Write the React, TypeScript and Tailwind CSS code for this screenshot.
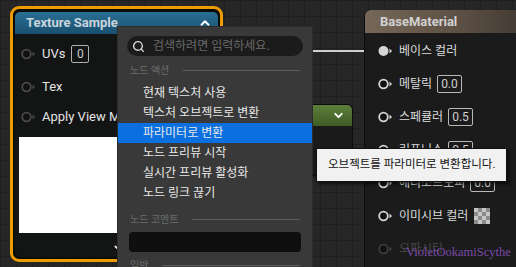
import { ChevronDown, ChevronUp, Search } from "lucide-react";

const FONT = "font-['Roboto','Noto_Sans_CJK_KR',sans-serif]";

function Pin({
  color = "#d4d4d4",
  filled = false,
}: {
  color?: string;
  filled?: boolean;
}) {
  return (
    <svg width="16" height="12" viewBox="0 0 16 12" className="shrink-0">
      <circle
        cx="5.5"
        cy="6"
        r={filled ? 5 : 4.3}
        fill={filled ? color : "#111"}
        stroke={color}
        strokeWidth={filled ? 0 : 1.8}
      />
      <polygon points="11.5,3.5 14,6 11.5,8.5" fill={color} />
    </svg>
  );
}

function ValueBox({ value }: { value: string }) {
  return (
    <span className="ml-[5px] flex h-[18px] items-center rounded-[2px] border border-[#b8b8b8] px-[3px] text-[12px] leading-none text-[#cfcfcf]">
      {value}
    </span>
  );
}

function TextureSampleNode() {
  return (
    <div className="absolute left-[10px] top-[6px] h-[256px] w-[213px] rounded-[9px] border-[3px] border-[#ec9c00] bg-[#0b0b0b] px-[2px] pt-[3px] pb-[2px]">
      <div className="flex h-full flex-col overflow-hidden rounded-[5px] bg-[#131414]">
        <div className="flex h-[22px] shrink-0 items-center justify-between bg-[linear-gradient(to_bottom,#2a6f94,#19506f)] pl-[11px] pr-[6px]">
          <span className="text-[13px] font-bold text-[#c9d4dc]">
            Texture Sample
          </span>
          <ChevronUp size={14} strokeWidth={3.2} className="text-white" />
        </div>
        <div className="flex flex-col pl-[6px] text-[13px] text-[#e4e4e4]">
          <div className="mt-[10px] flex h-[20px] items-center gap-[5px]">
            <Pin color="#4a4a4a" />
            <span>UVs</span>
            <span className="ml-[1px] flex h-[18px] w-[18px] items-center justify-center rounded-[2px] border border-[#b0b0b0] text-[12px] text-[#d0d0d0]">
              0
            </span>
          </div>
          <div className="mt-[13px] flex h-[20px] items-center gap-[5px]">
            <Pin color="#4a4a4a" />
            <span>Tex</span>
          </div>
          <div className="mt-[10px] flex h-[20px] items-center gap-[5px] whitespace-nowrap">
            <Pin color="#4a4a4a" />
            <span>Apply View MipBias</span>
          </div>
          <div className="mt-[10px] ml-[-2px] h-[96px] w-[110px] bg-white" />
          <div className="flex justify-end pr-[96px] pt-[10px]">
            <ChevronDown size={9} strokeWidth={4} className="text-white" />
          </div>
        </div>
      </div>
    </div>
  );
}

function ParamNode() {
  return (
    <div className="absolute left-[250px] top-[104px] h-[72px] w-[103px] overflow-hidden rounded-[6px] border border-[#0b0b0b] bg-[#1a1a1a]">
      <div className="flex h-[21px] items-center justify-end bg-[linear-gradient(to_bottom,#5d7f3a,#3f5c26)] pr-[7px]">
        <ChevronDown size={13} strokeWidth={3.5} className="text-white" />
      </div>
      <div className="flex justify-end pr-[16px] pt-[22px]">
        <span className="h-[11px] w-[11px] rounded-full bg-white" />
      </div>
    </div>
  );
}

const materialRows: {
  label: string;
  value?: string;
  filled?: boolean;
  checker?: boolean;
  dim?: boolean;
}[] = [
  { label: "베이스 컬러", filled: true },
  { label: "메탈릭", value: "0.0" },
  { label: "스페큘러", value: "0.5" },
  { label: "러프니스", value: "0.5" },
  { label: "애니소트로피", value: "0.0" },
  { label: "이미시브 컬러", checker: true },
  { label: "오파시티", dim: true },
];

function BaseMaterialNode() {
  return (
    <div className="absolute left-[364px] top-[10px] h-[270px] w-[170px] rounded-tl-[7px] border-l border-[#0c0c0c] bg-[#1b1b1b]">
      <div className="flex h-[23px] items-center rounded-tl-[6px] bg-[linear-gradient(to_right,#766858,#5a4e43_60%,#3e3630)] pl-[15px]">
        <span className="text-[13px] font-bold text-[#d2d2d2]">
          BaseMaterial
        </span>
      </div>
      <div className="flex flex-col gap-[13px] pl-[13px] pt-[8px] text-[12px]">
        {materialRows.map((row) => (
          <div key={row.label} className="flex h-[20px] items-center">
            <Pin
              color={row.dim ? "#3e3e3e" : "#d6d6d6"}
              filled={row.filled}
            />
            <span
              className={`ml-[5px] ${row.dim ? "text-[#4a4a4a]" : "text-[#dcdcdc]"}`}
            >
              {row.label}
            </span>
            {row.value && <ValueBox value={row.value} />}
            {row.checker && (
              <span className="ml-[6px] h-[16px] w-[16px] [background:repeating-conic-gradient(#8c8c8c_0_25%,#c6c6c6_0_50%)_0_0/8px_8px]" />
            )}
          </div>
        ))}
      </div>
    </div>
  );
}

function SectionHeader({ label }: { label: string }) {
  return (
    <div className="flex h-[14px] items-center px-[12px]">
      <span className="text-[10px] text-[#6c6c6c]">{label}</span>
      <span className="ml-[14px] h-px flex-1 bg-[#5c5c5c]" />
    </div>
  );
}

const actions = [
  "현재 텍스처 사용",
  "텍스처 오브젝트로 변환",
  "파라미터로 변환",
  "노드 프리뷰 시작",
  "실시간 프리뷰 활성화",
  "노드 링크 끊기",
];

function ContextMenu() {
  return (
    <div className="absolute left-[117px] top-[26px] h-[260px] w-[196px] border border-[#2c2c2c] bg-[#393939] pt-[9px]">
      <div className="mx-[9px] flex h-[20px] items-center gap-[8px] rounded-full bg-[#1b1b1b] pl-[5px]">
        <Search size={13} strokeWidth={2.6} className="text-[#d8d8d8]" />
        <span className="text-[12px] text-[#6a6a6a]">검색하려면 입력하세요.</span>
      </div>
      <div className="mt-[7px]">
        <SectionHeader label="노드 액션" />
      </div>
      <div className="mt-[6px] flex flex-col">
        {actions.map((a) => (
          <div
            key={a}
            className={`flex h-[20px] items-center pl-[25px] text-[12px] text-[#e8e8e8] ${a === "파라미터로 변환" ? "bg-[#0a70e0]" : ""}`}
          >
            {a}
          </div>
        ))}
      </div>
      <div className="mt-[9px]">
        <SectionHeader label="노드 코멘트" />
      </div>
      <div className="mx-[11px] mt-[6px] h-[20px] rounded-[4px] bg-[#0f0f0f]" />
      <div className="mt-[6px]">
        <SectionHeader label="일반" />
      </div>
    </div>
  );
}

export default function App() {
  return (
    <div
      className={`relative h-[267px] w-[516px] overflow-hidden bg-[#262626] [background-image:linear-gradient(#1f1f1f_1px,transparent_1px),linear-gradient(90deg,#1f1f1f_1px,transparent_1px)] [background-size:16px_16px] ${FONT}`}
    >
      <div className="absolute left-[220px] top-[50px] h-[2px] w-[160px] bg-[#cfcfcf]" />
      <TextureSampleNode />
      <ParamNode />
      <BaseMaterialNode />
      <ContextMenu />
      <div className="absolute left-[316px] top-[148px] flex h-[34px] w-[191px] items-center border border-[#111] bg-[#f1f1f1] pl-[11px] shadow-[2px_2px_3px_rgba(0,0,0,0.6)]">
        <span className="text-[11.5px] text-[#111]">
          오브젝트를 파라미터로 변환합니다.
        </span>
      </div>
      <span className="absolute left-[406px] top-[244px] whitespace-nowrap font-['Liberation_Serif',serif] text-[12.5px] leading-[16px] text-[#7a4aa8]">
        VioletOokamiScythe
      </span>
    </div>
  );
}
